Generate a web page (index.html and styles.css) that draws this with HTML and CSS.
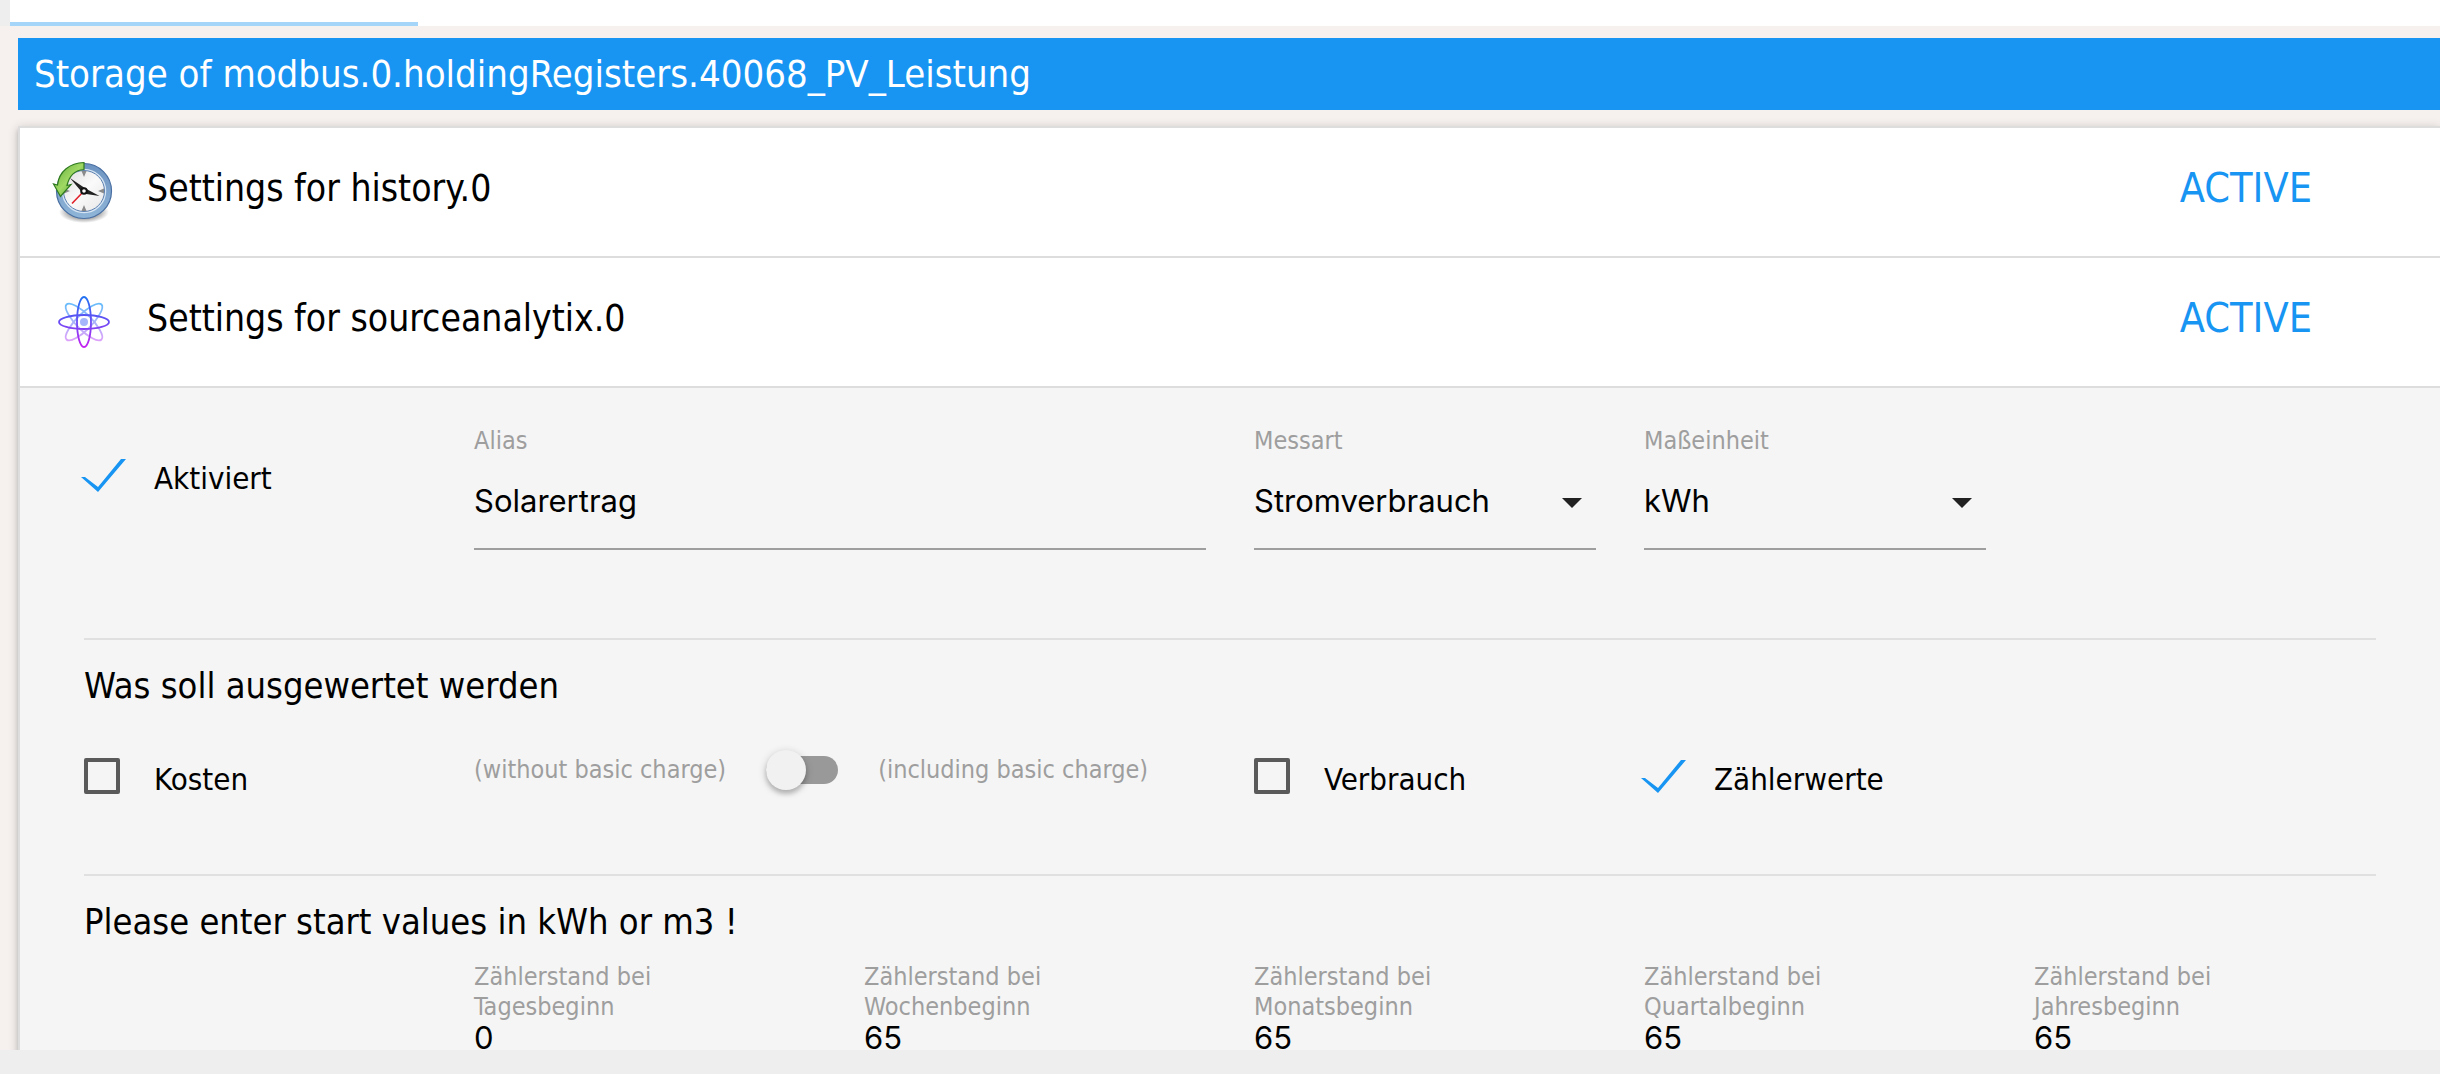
FILE: index.html
```html
<!DOCTYPE html>
<html lang="de">
<head>
<meta charset="utf-8">
<meta name="viewport" content="width=device-width, initial-scale=1">
<title>Storage of modbus.0.holdingRegisters.40068_PV_Leistung</title>
<link rel="stylesheet" href="styles.css">
</head>
<body>
<div class="app">
  <div class="tabs"><div class="tab-indicator"></div></div>
  <main class="page">
    <h1 class="page-title">Storage of modbus.0.holdingRegisters.40068_PV_Leistung</h1>
    <div class="card">
      <section class="adapter">
        <header class="adapter-header">
          <svg class="adapter-icon" viewBox="0 0 64 64" aria-hidden="true">
            <defs>
              <linearGradient id="rim" x1="0" y1="0" x2="0" y2="1"><stop offset="0" stop-color="#6d93c1"/><stop offset="1" stop-color="#8fb5d8"/></linearGradient>
              <linearGradient id="face" x1="0" y1="0" x2="1" y2="1"><stop offset="0" stop-color="#dcdcdc"/><stop offset="0.5" stop-color="#fafafa"/><stop offset="1" stop-color="#e6e6e6"/></linearGradient>
              <linearGradient id="arrow" x1="0" y1="0" x2="1" y2="1"><stop offset="0" stop-color="#5fa83a"/><stop offset="0.5" stop-color="#a0d964"/><stop offset="1" stop-color="#3f9228"/></linearGradient>
              <radialGradient id="shade"><stop offset="0.6" stop-color="#000" stop-opacity="0.35"/><stop offset="1" stop-color="#000" stop-opacity="0"/></radialGradient>
            </defs>
            <ellipse cx="32" cy="52" rx="25" ry="11" fill="url(#shade)"/>
            <circle cx="32" cy="31" r="27.500" fill="url(#rim)" stroke="#4a70a3" stroke-width="1.2"/>
            <circle cx="32" cy="31" r="21.5" fill="url(#face)" stroke="#d6e5f3" stroke-width="1.5"/>
            <circle cx="32" cy="31" r="20.5" fill="none" stroke="#5a7fb0" stroke-width="1"/>
            <path d="M29.5 11h5L32 17zM29.5 51h5L32 45zM12 28.500v5l6-2.500zM52 28.500v5l-6-2.500z" fill="#8a8a8a"/>
            <path d="M32 31L20 43.500" stroke="#e0202a" stroke-width="1.6"/>
            <path d="M18 18L33.500 28.500l14 7.500L31 33.500z" fill="#222"/>
            <circle cx="32" cy="31" r="2.800" fill="#fff" stroke="#111" stroke-width="2"/>
            <path d="M32 2.500v7C22 10 17 17 15 25.500l4-1-10.500 12L1.500 24l4 1C7 11 18 3 32 2.500z" fill="url(#arrow)" stroke="#2f7a20" stroke-width="1.2"/>
          </svg>
          <h2 class="adapter-name">Settings for history.0</h2>
          <span class="adapter-state">ACTIVE</span>
        </header>
      </section>
      <section class="adapter">
        <header class="adapter-header">
          <svg class="adapter-icon" viewBox="0 0 64 64" aria-hidden="true" fill="none" stroke-width="1.8">
            <defs>
              <linearGradient id="orbit" gradientUnits="userSpaceOnUse" x1="0" y1="6" x2="0" y2="58"><stop offset="0" stop-color="#1d72f2"/><stop offset="0.5" stop-color="#6a4cf5"/><stop offset="1" stop-color="#c81ff0"/></linearGradient>
              <linearGradient id="glow" gradientUnits="userSpaceOnUse" x1="0" y1="12" x2="0" y2="52"><stop offset="0" stop-color="#62bdfb"/><stop offset="0.5" stop-color="#a9b4fa"/><stop offset="1" stop-color="#e0a0fa"/></linearGradient>
            </defs>
            <g stroke="url(#glow)">
              <path d="M14.500 14.500C18 11 29 18 37 26S53 46 49.500 49.500 35 46 27 38 11 18 14.500 14.500z"/>
              <path d="M49.500 14.500C46 11 35 18 27 26S11 46 14.500 49.500 29 46 37 38 53 18 49.500 14.500z"/>
            </g>
            <circle cx="32" cy="32" r="4" fill="#a6b6fb"/>
            <ellipse cx="32" cy="32" rx="25" ry="7" stroke="url(#orbit)"/>
            <ellipse cx="32" cy="32" rx="7" ry="25" stroke="url(#orbit)"/>
          </svg>
          <h2 class="adapter-name">Settings for sourceanalytix.0</h2>
          <span class="adapter-state">ACTIVE</span>
        </header>
        <form class="settings">
          <div class="row row-general">
            <label class="check span-2"><input type="checkbox" checked><span>Aktiviert</span></label>
            <div class="field span-4">
              <label for="alias">Alias</label>
              <input id="alias" class="control" type="text" value="Solarertrag">
            </div>
            <div class="field span-2">
              <label for="kind">Messart</label>
              <div class="select"><select id="kind" class="control"><option>Stromverbrauch</option></select></div>
            </div>
            <div class="field span-2">
              <label for="unit">Maßeinheit</label>
              <div class="select"><select id="unit" class="control"><option>kWh</option></select></div>
            </div>
          </div>
          <h3 class="section-title">Was soll ausgewertet werden</h3>
          <div class="row row-evaluate">
            <label class="check span-2"><input type="checkbox"><span>Kosten</span></label>
            <label class="switch span-4"><span>(without basic charge)</span><input type="checkbox" role="switch"><span>(including basic charge)</span></label>
            <label class="check span-2"><input type="checkbox"><span>Verbrauch</span></label>
            <label class="check span-2"><input type="checkbox" checked><span>Zählerwerte</span></label>
          </div>
          <h3 class="section-title">Please enter start values in kWh or m3 !</h3>
          <div class="row row-start">
            <div class="field span-2 first"><label for="day">Zählerstand bei<br>Tagesbeginn</label><input id="day" class="control" type="text" value="0"></div>
            <div class="field span-2"><label for="week">Zählerstand bei<br>Wochenbeginn</label><input id="week" class="control" type="text" value="65"></div>
            <div class="field span-2"><label for="month">Zählerstand bei<br>Monatsbeginn</label><input id="month" class="control" type="text" value="65"></div>
            <div class="field span-2"><label for="quarter">Zählerstand bei<br>Quartalbeginn</label><input id="quarter" class="control" type="text" value="65"></div>
            <div class="field span-2"><label for="year">Zählerstand bei<br>Jahresbeginn</label><input id="year" class="control" type="text" value="65"></div>
          </div>
        </form>
      </section>
    </div>
  </main>
  <footer class="footer"></footer>
</div>
</body>
</html>
```
FILE: styles.css
```css
* { box-sizing: border-box; }

body {
  margin: 0;
  background: #eee;
  color: #000;
  font-family: "DejaVu Sans Condensed", Tahoma, "DejaVu Sans", sans-serif;
}

.app {
  display: flex;
  flex-direction: column;
  height: 100vh;
}

.tabs {
  display: flex;
  align-items: flex-end;
  flex: none;
  height: 26px;
  margin-left: 10px;
  background: #fff;
}

.tab-indicator {
  width: 408px;
  height: 4px;
  background: #a6d5fa;
}

.page {
  flex: 1;
  min-height: 0;
  padding: 12px 0 0 18px;
  overflow: hidden;
  background: #f6f1ee;
}

.footer {
  flex: none;
  height: 24px;
  background: #eee;
}

h1, h2, h3 {
  margin: 0;
  font-weight: normal;
}

.page-title {
  padding-left: 16px;
  background: #1895f3;
  color: #fff;
  font-size: 38px;
  line-height: 72px;
}

.card {
  margin-top: 16px;
  border: solid #ddd;
  border-width: 2px 0 0 2px;
  background: #f5f5f5;
  box-shadow: 0 4px 4px rgba(0, 0, 0, .14), 0 6px 2px -4px rgba(0, 0, 0, .12), 0 2px 10px rgba(0, 0, 0, .2);
}

.adapter-header {
  display: flex;
  align-items: center;
  height: 130px;
  padding: 0 128px 0 32px;
  border-bottom: 2px solid #ddd;
  background: #fff;
}

.adapter-icon {
  flex: none;
  width: 64px;
  height: 64px;
}

.adapter-name {
  flex: 1;
  padding: 0 0 6px 31px;
  font-size: 37px;
  line-height: 48px;
}

.adapter-state {
  padding-bottom: 8px;
  color: #1895f3;
  font-size: 41px;
  line-height: 48px;
}

.settings { padding: 0 64px; }

.row {
  display: grid;
  grid-template-columns: repeat(12, 1fr);
  column-gap: 48px;
  align-items: start;
}

.span-2 { grid-column: span 2; }
.span-4 { grid-column: span 4; }
.first { grid-column: 3 / span 2; }

.row-general {
  padding: 38px 0 88px;
  border-bottom: 2px solid #e0e0e0;
}

.row-general .check { margin-top: 28px; }

.row-evaluate {
  padding: 45px 0 77px;
  border-bottom: 2px solid #e0e0e0;
}

.row-start { padding: 16px 0 40px; }

.section-title {
  margin-top: 22px;
  font-size: 36px;
  line-height: 48px;
}

.field label,
.switch {
  color: #9e9e9e;
  font-size: 25px;
  line-height: 30px;
}

.field label { display: block; }

.control {
  display: block;
  width: 100%;
  height: 94px;
  margin: 0;
  padding: 0 0 4px;
  border: 0;
  border-bottom: 2px solid #9e9e9e;
  border-radius: 0;
  outline: 0;
  appearance: none;
  background: transparent;
  color: #000;
  font-family: Inter, "Liberation Sans", sans-serif;
  font-size: 31px;
}

.row-start .control {
  height: 32px;
  padding: 0;
  line-height: 28px;
}

.select { position: relative; }

.select::after {
  content: "";
  position: absolute;
  top: 42px;
  right: 14px;
  width: 20px;
  height: 10px;
  background: #212121;
  clip-path: polygon(0 0, 100% 0, 50% 100%);
  pointer-events: none;
}

.check {
  display: flex;
  align-items: center;
  gap: 34px;
  font-size: 31px;
  line-height: 36px;
}

.check span { padding-top: 6px; }

.check input {
  position: relative;
  flex: none;
  width: 36px;
  height: 36px;
  margin: 0;
  border: 4px solid #5a5a5a;
  border-radius: 2px;
  appearance: none;
}

.check input:checked { border-color: transparent; }

.check input:checked::before {
  content: "";
  position: absolute;
  top: -2px;
  left: -7px;
  width: 45px;
  height: 33px;
  background: #1895f3;
  clip-path: polygon(0 18px, 4px 18px, 17px 28px, 40px 0, 45px 0, 17px 33px);
}

.switch {
  display: flex;
  align-items: center;
  gap: 40px;
  height: 30px;
  white-space: nowrap;
}

.switch input {
  position: relative;
  flex: none;
  width: 72px;
  height: 28px;
  margin: 0;
  border-radius: 14px;
  appearance: none;
  background: #999;
}

.switch input::before {
  content: "";
  position: absolute;
  top: -6px;
  left: 0;
  width: 40px;
  height: 40px;
  border-radius: 50%;
  background: #f1f1f1;
  box-shadow: 0 4px 4px rgba(0, 0, 0, .16), 0 2px 8px rgba(0, 0, 0, .2);
}

.switch input:checked::before { left: 32px; }
```
